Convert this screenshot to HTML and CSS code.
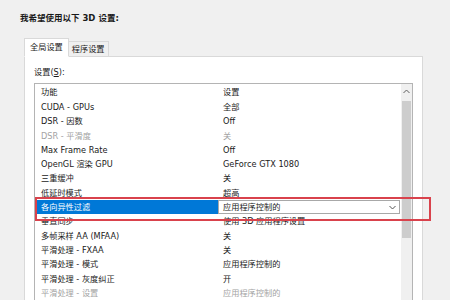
FILE: index.html
```html
<!DOCTYPE html>
<html lang="zh-CN">
<head>
  <meta charset="UTF-8">
  <title>管理 3D 设置</title>
  <link rel="stylesheet" href="styles.css">
</head>
<body>
  <div class="title">我希望使用以下 3D 设置:</div>
  <div class="tabs">
    <div class="tab active">全局设置</div>
    <div class="tab">程序设置</div>
  </div>
  <div class="panel">
    <div class="label">设置(<u>S</u>):</div>
    <div class="listbox">
      <div class="grid">
        <div class="row head"><span class="name">功能</span><span class="value">设置</span></div>
        <div class="row"><span class="name">CUDA - GPUs</span><span class="value">全部</span></div>
        <div class="row"><span class="name">DSR - 因数</span><span class="value">Off</span></div>
        <div class="row off"><span class="name">DSR - 平滑度</span><span class="value">关</span></div>
        <div class="row"><span class="name">Max Frame Rate</span><span class="value">Off</span></div>
        <div class="row"><span class="name">OpenGL 渲染 GPU</span><span class="value">GeForce GTX 1080</span></div>
        <div class="row"><span class="name">三重缓冲</span><span class="value">关</span></div>
        <div class="row"><span class="name">低延时模式</span><span class="value">超高</span></div>
        <div class="row selected">
          <span class="name">各向异性过滤</span>
          <span class="combo">
            <span>应用程序控制的</span>
            <svg width="7" height="5" viewBox="0 0 7 5"><polyline points="0.5,1 3.5,4 6.5,1" fill="none" stroke="#555" stroke-width="1"/></svg>
          </span>
        </div>
        <div class="row"><span class="name">垂直同步</span><span class="value">使用 3D 应用程序设置</span></div>
        <div class="row"><span class="name">多帧采样 AA (MFAA)</span><span class="value">关</span></div>
        <div class="row"><span class="name">平滑处理 - FXAA</span><span class="value">关</span></div>
        <div class="row"><span class="name">平滑处理 - 模式</span><span class="value">应用程序控制的</span></div>
        <div class="row"><span class="name">平滑处理 - 灰度纠正</span><span class="value">开</span></div>
        <div class="row off"><span class="name">平滑处理 - 设置</span><span class="value">应用程序控制的</span></div>
      </div>
      <div class="scrollbar">
        <div class="sb-up">
          <svg width="7" height="5" viewBox="0 0 7 5"><polyline points="0.5,4 3.5,1 6.5,4" fill="none" stroke="#606060" stroke-width="1"/></svg>
        </div>
        <div class="thumb"></div>
      </div>
    </div>
  </div>
  <div class="highlight"></div>
</body>
</html>
```

FILE: styles.css
```css
body {
  margin: 0;
  height: 300px;
  overflow: hidden;
  position: relative;
  background-color: #f0f0f0;
  font-family: "DejaVu Sans", "Noto Sans CJK SC", sans-serif;
  font-size: 8.2px;
  color: #1a1a1a;
}
.title {
  font-weight: bold;
  font-size: 8.5px;
  line-height: 12px;
  padding: 12px 0 0 20px;
}
.tabs {
  display: flex;
  align-items: flex-end;
  margin: 15px 0 -1px 24px;
  height: 18px;
  position: relative;
  z-index: 1;
}
.tab {
  border: 1px solid #d9d9d9;
  background-color: #f0f0f0;
  line-height: 14px;
  padding: 0 3px;
  margin-left: -1px;
}
.tab.active {
  margin-left: 0;
  background-color: #fff;
  line-height: 17px;
  padding: 0 5px;
  border-bottom-color: #fff;
  position: relative;
  z-index: 1;
}
.panel {
  box-sizing: border-box;
  width: 399px;
  height: 260px;
  margin-left: 24px;
  border: 1px solid #d9d9d9;
  background-color: #fff;
  padding: 9px 9px 0;
}
.label {
  line-height: 12px;
  margin-bottom: 5px;
}
.listbox {
  display: flex;
  border: 1px solid #b4b4b4;
  height: 240px;
}
.grid {
  flex: 1;
  padding: 0 1px 0 2px;
}
.row {
  display: grid;
  grid-template-columns: 181px 1fr;
  height: 14.3px;
  line-height: 14.3px;
  white-space: nowrap;
}
.row.head {
  height: 16px;
  line-height: 16px;
}
.name {
  padding-left: 4px;
}
.value {
  padding-left: 5px;
}
.row.off {
  color: #a3a3a3;
}
.row.selected .name {
  background-color: #0078d7;
  color: #fff;
}
.combo {
  display: flex;
  justify-content: space-between;
  align-items: center;
  box-sizing: border-box;
  border: 1px solid #a8a8a8;
  background-color: #fff;
  padding: 0 3px 0 4px;
  line-height: 12px;
}
.scrollbar {
  width: 11px;
  background-color: #f0f0f0;
  display: flex;
  flex-direction: column;
  align-items: center;
}
.sb-up {
  height: 14px;
  display: flex;
  align-items: center;
}
.thumb {
  width: 9px;
  height: 137px;
  margin-top: 3px;
  background-color: #cdcdcd;
}
.highlight {
  position: absolute;
  left: 35px;
  top: 197px;
  width: 396px;
  height: 24px;
  box-sizing: border-box;
  border: 2px solid #d9424c;
}
```
